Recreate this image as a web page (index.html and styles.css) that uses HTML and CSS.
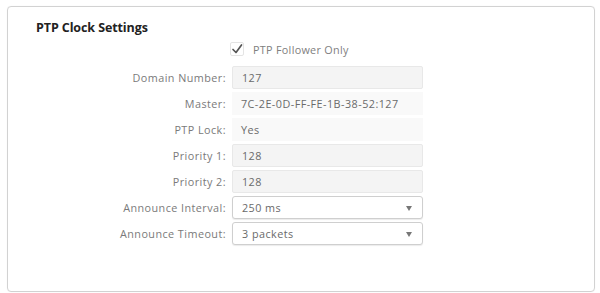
FILE: index.html
```html
<!DOCTYPE html>
<html>
<head>
<meta charset="utf-8">
<link rel="stylesheet" href="styles.css">
</head>
<body>
<div class="card">
  <div class="title">PTP Clock Settings</div>
  <div class="form">
    <div class="row check-row">
      <span class="label"></span>
      <span class="check">
        <span class="box"><svg width="12" height="12" viewBox="0 0 12 12"><path d="M2 6.5 L5 9.5 L10.5 2" fill="none" stroke="#555" stroke-width="1.7" stroke-linecap="round" stroke-linejoin="round"/></svg></span>
        <span class="check-text">PTP Follower Only</span>
      </span>
    </div>
    <div class="row"><span class="label">Domain Number:</span><span class="field input">127</span></div>
    <div class="row"><span class="label">Master:</span><span class="field readonly">7C-2E-0D-FF-FE-1B-38-52:127</span></div>
    <div class="row"><span class="label">PTP Lock:</span><span class="field readonly">Yes</span></div>
    <div class="row"><span class="label">Priority 1:</span><span class="field input">128</span></div>
    <div class="row"><span class="label">Priority 2:</span><span class="field input">128</span></div>
    <div class="row"><span class="label">Announce Interval:</span><span class="field select">250 ms<span class="arrow"></span></span></div>
    <div class="row"><span class="label">Announce Timeout:</span><span class="field select">3 packets<span class="arrow"></span></span></div>
  </div>
</div>
</body>
</html>
```

FILE: styles.css
```css
html, body {
  margin: 0;
  padding: 0;
  background: #fff;
}
body {
  padding: 6px 5px 1px 7px;
  font-family: "Open Sans", "Noto Sans", sans-serif;
  height: 293px;
  box-sizing: border-box;
}
.card {
  border: 1px solid #d2d2d2;
  border-radius: 4px;
  height: 100%;
  box-sizing: border-box;
  padding: 13px 0 0 28px;
  box-shadow: 0 0 1px rgba(0,0,0,0.08);
}
.title {
  font-size: 12.5px;
  font-weight: 700;
  color: #222;
  letter-spacing: -0.1px;
  line-height: 16px;
}
.form {
  display: flex;
  flex-direction: column;
  gap: 3px;
  margin-top: 2px;
}
.row {
  display: flex;
  align-items: center;
  height: 23px;
}
.check-row {
  height: 22px;
  margin-bottom: 3px;
}
.label {
  width: 190px;
  text-align: right;
  padding-right: 6px;
  font-size: 10.8px;
  color: #7a7a7a;
  flex: none;
  letter-spacing: 0.45px;
}
.check {
  display: flex;
  align-items: center;
  gap: 9px;
  margin-left: -2px;
}
.box {
  width: 14px;
  height: 14px;
  box-sizing: border-box;
  border: 1px solid #e4e4e4;
  border-radius: 2px;
  display: inline-flex;
  align-items: center;
  justify-content: center;
}
.check-text {
  font-size: 10.8px;
  color: #808080;
  letter-spacing: 0.3px;
}
.field {
  width: 191px;
  height: 23px;
  box-sizing: border-box;
  display: flex;
  align-items: center;
  padding-left: 9px;
  font-size: 10.8px;
  color: #6a6a6a;
  position: relative;
  letter-spacing: 0.45px;
}
.input {
  background: #f4f4f4;
  border: 1px solid #e8e8e8;
  border-radius: 2px;
}
.readonly {
  background: #f9f9f9;
}
.select {
  background: #fff;
  border: 1px solid #cfcfcf;
  border-radius: 3px;
  box-shadow: 0 1px 1px rgba(0,0,0,0.08);
}
.arrow {
  position: absolute;
  right: 10px;
  top: 9px;
  width: 0;
  height: 0;
  border-left: 3px solid transparent;
  border-right: 3px solid transparent;
  border-top: 5px solid #777;
}
```
